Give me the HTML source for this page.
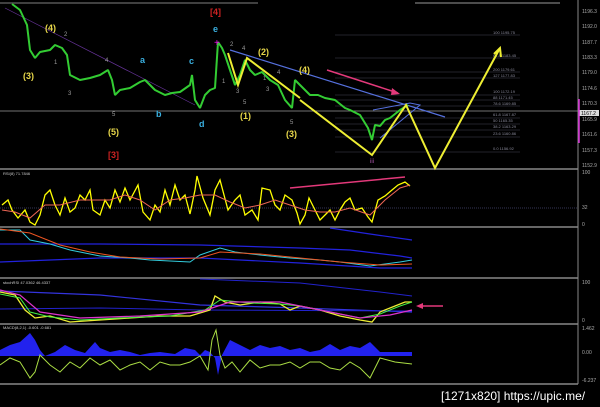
<!DOCTYPE html><html><head><style>
html,body{margin:0;padding:0;background:#000;width:600px;height:407px;overflow:hidden;font-family:"Liberation Sans",sans-serif}
svg{position:absolute;left:0;top:0}
.w{font-family:"Liberation Sans",sans-serif;font-size:9px;font-weight:bold}
.a{font-size:5px;fill:#aaa}
.f{font-size:4px;fill:#889}
</style></head><body>
<svg width="600" height="407" viewBox="0 0 600 407">
<rect width="600" height="407" fill="#000"/>
<!-- panel borders -->
<g stroke="#888" stroke-width="1.5">
<line x1="0" y1="169" x2="578" y2="169"/>
<line x1="0" y1="227" x2="578" y2="227"/>
<line x1="0" y1="278" x2="578" y2="278"/>
<line x1="0" y1="324" x2="578" y2="324"/>
<line x1="0" y1="384" x2="578" y2="384"/>
<line x1="0" y1="3" x2="258" y2="3" stroke="#555"/>
<line x1="415" y1="3" x2="560" y2="3" stroke="#666"/>
</g>
<line x1="578" y1="0" x2="578" y2="384" stroke="#888" stroke-width="1"/>
<line x1="0" y1="111" x2="578" y2="111" stroke="#999" stroke-width="0.8"/>
<!-- fib lines -->
<g stroke="#445" stroke-width="0.6">
<line x1="335" y1="35" x2="520" y2="35"/><line x1="335" y1="58" x2="520" y2="58"/>
<line x1="335" y1="72" x2="520" y2="72"/><line x1="335" y1="78" x2="520" y2="78"/>
<line x1="335" y1="95" x2="520" y2="95"/><line x1="335" y1="100" x2="520" y2="100"/>
<line x1="335" y1="106" x2="520" y2="106"/><line x1="335" y1="118" x2="520" y2="118"/>
<line x1="335" y1="124" x2="520" y2="124"/><line x1="335" y1="130" x2="520" y2="130"/>
<line x1="335" y1="137" x2="520" y2="137"/><line x1="335" y1="152" x2="520" y2="152"/>
</g>
<g class="f"><text x="493" y="34">100 1195.75</text><text x="493" y="57">61.8 1183.45</text><text x="493" y="71">200 1179.61</text><text x="493" y="77">127 1177.83</text><text x="493" y="93">100 1172.19</text><text x="493" y="99">88 1171.45</text><text x="493" y="105">78.6 1169.85</text><text x="493" y="116">61.8 1167.87</text><text x="493" y="122">50 1165.35</text><text x="493" y="128">38.2 1163.29</text><text x="493" y="135">23.6 1160.86</text><text x="493" y="150">0.0 1156.92</text></g>
<!-- trendlines -->
<line x1="5" y1="8" x2="195" y2="105" stroke="#639" stroke-width="0.7"/>
<line x1="230" y1="50" x2="445" y2="117" stroke="#5570dd" stroke-width="1.2"/>
<polyline points="373,110 410,103 420,105 380,138" fill="none" stroke="#5570dd" stroke-width="1"/>
<!-- price -->
<polyline points="12,4 20,10 27,25 30,50 35,58 40,52 50,50 55,45 62,48 67,55 70,75 80,80 90,78 100,75 108,70 112,80 115,95 120,90 130,88 140,82 145,80 155,90 165,95 172,93 180,92 190,85 192,75 195,100 200,108 205,95 210,90 215,88 218,42 222,48 225,55 230,70 235,85 240,75 245,60 250,70 255,75 262,72 270,80 278,85 285,100 292,108 295,80 300,85 305,90 310,95 318,95 325,98 335,100 345,108 350,110 360,115 368,128 372,140 375,125 380,126 385,120 390,118 400,110 408,105" fill="none" stroke="#3c3" stroke-width="2" stroke-linejoin="bevel"/>
<!-- yellow waves -->
<g fill="none" stroke="#ee3" stroke-width="2">
<polyline points="228,53 238,85 247,58 300,98"/>
<polyline points="300,100 372,155 406,105 435,168 500,48"/>
<polyline points="494,54 500,48 501,57"/>
</g>
<!-- pink arrow -->
<line x1="327" y1="70" x2="398" y2="93" stroke="#e3397a" stroke-width="1.5"/>
<polygon points="400,94 392,88 391,95" fill="#e3397a"/>
<!-- labels -->
<g class="w" fill="#e8d84a">
<text x="23" y="79">(3)</text><text x="45" y="31">(4)</text><text x="108" y="135">(5)</text>
<text x="240" y="119">(1)</text><text x="258" y="55">(2)</text><text x="286" y="137">(3)</text><text x="299" y="73">(4)</text>
</g>
<g class="w" fill="#3ab0e0"><text x="140" y="63">a</text><text x="156" y="117">b</text><text x="189" y="64">c</text><text x="199" y="127">d</text><text x="213" y="32">e</text></g>
<g class="w" fill="#c22" font-size="11"><text x="108" y="158">[3]</text><text x="210" y="15">[4]</text></g>
<g font-size="6" fill="#999"><text x="64" y="36">2</text><text x="54" y="64">1</text><text x="105" y="62">4</text><text x="68" y="95">3</text><text x="112" y="116">5</text><text x="230" y="46">2</text><text x="242" y="50">4</text><text x="236" y="93">3</text><text x="243" y="104">5</text><text x="222" y="83">1</text><text x="266" y="91">3</text><text x="277" y="74">4</text><text x="290" y="124">5</text><text x="263" y="80">1</text></g>
<text x="214" y="46" fill="#e0e" font-size="10">+</text>
<text x="370" y="163" fill="#a5a" font-size="6">iii</text>
<!-- right axis labels -->
<g class="a"><text x="582" y="13">1196.3</text><text x="582" y="28">1192.0</text><text x="582" y="44">1187.7</text><text x="582" y="59">1183.3</text><text x="582" y="74">1179.0</text><text x="582" y="90">1174.6</text><text x="582" y="105">1170.3</text><text x="582" y="121">1165.9</text><text x="582" y="136">1161.6</text><text x="582" y="152">1157.3</text><text x="582" y="167">1152.9</text></g>
<rect x="579" y="110" width="20" height="6" fill="#ddd"/><text x="581" y="115" font-size="5" fill="#000">1167.2</text>
<line x1="579" y1="99" x2="579" y2="143" stroke="#d3d" stroke-width="1.5"/>
<!-- RSI -->
<text x="3" y="175" font-size="4" fill="#ccc">RSI(8) 71.7846</text>
<line x1="0" y1="208" x2="578" y2="208" stroke="#335" stroke-dasharray="1,1"/>
<polyline points="2,205 8,200 12,210 18,218 25,210 30,222 35,225 40,215 45,195 50,190 55,205 60,215 65,198 70,212 75,208 80,195 85,200 90,190 93,210 100,215 105,200 110,208 115,190 120,202 125,188 130,200 138,185 143,212 150,220 155,205 160,212 165,190 170,205 175,185 180,200 185,195 190,214 195,190 197,176 203,198 210,215 215,190 220,180 228,210 235,200 240,195 245,215 252,210 258,220 262,188 270,190 275,205 280,210 285,195 292,200 297,213 300,224 305,215 309,198 315,210 320,220 325,215 330,210 335,220 340,210 345,202 350,198 355,210 362,208 368,217 372,222 378,200 385,196 392,190 398,185 405,182 410,186" fill="none" stroke="#ff0" stroke-width="1.3"/>
<polyline points="2,210 15,212 30,218 45,205 60,205 80,200 95,200 110,200 125,195 140,200 155,210 170,200 185,198 200,195 215,195 230,202 245,208 260,205 275,200 290,205 305,210 320,212 335,212 350,208 370,215 385,200 400,188 410,185" fill="none" stroke="#e65" stroke-width="1"/>
<line x1="290" y1="188" x2="405" y2="177" stroke="#e3397a" stroke-width="1.5"/>
<g class="a" font-size="4"><text x="582" y="174">100</text><text x="582" y="209">32</text><text x="582" y="226">0</text></g>
<!-- panel 2 -->
<polyline points="0,244 100,244 200,245 300,248 350,250 400,256 412,258" fill="none" stroke="#22d" stroke-width="1.2"/>
<polyline points="0,262 100,258 200,258 300,263 380,268 412,268" fill="none" stroke="#22d" stroke-width="1.2"/>
<polyline points="330,228 370,234 412,240" fill="none" stroke="#22d" stroke-width="1.2"/>
<polyline points="0,230 20,230 30,240 50,244 70,250 100,256 130,258 150,260 190,262 200,255 220,248 235,252 260,255 290,258 320,260 340,262 370,266 385,264 400,262 412,260" fill="none" stroke="#3cd" stroke-width="1"/>
<polyline points="0,229 30,233 60,245 90,252 120,257 160,259 200,258 220,252 260,254 300,258 340,262 380,265 412,264" fill="none" stroke="#e52" stroke-width="1"/>
<!-- stoch -->
<text x="3" y="284" font-size="4" fill="#ccc">stochRSI 47.0362 46.4337</text>
<polyline points="0,291 100,295 200,305 300,308 412,312" fill="none" stroke="#33d" stroke-width="1.2"/>
<polyline points="0,309 100,308 200,310 412,311" fill="none" stroke="#22c" stroke-width="1"/>
<polyline points="200,279 300,283 380,292 412,296" fill="none" stroke="#22c" stroke-width="1"/>
<polyline points="0,292 15,295 25,310 35,318 50,316 70,322 100,320 130,318 160,316 190,316 210,310 215,296 225,302 240,305 260,302 280,304 290,310 300,306 320,310 340,316 360,320 372,322 380,312 395,306 405,302 412,302" fill="none" stroke="#ee3" stroke-width="1.3"/>
<polyline points="0,294 20,298 30,312 50,317 80,320 120,318 170,316 205,310 220,300 250,303 280,304 300,306 330,312 360,318 380,314 400,306 412,302" fill="none" stroke="#4e4" stroke-width="1"/>
<polyline points="0,290 20,295 40,312 80,318 140,316 200,312 230,302 280,302 320,310 360,318 390,315 412,310" fill="none" stroke="#d3c" stroke-width="1.2"/>
<line x1="443" y1="306" x2="420" y2="306" stroke="#e3397a" stroke-width="1.5"/>
<polygon points="416,306 423,303 423,309" fill="#e3397a"/>
<g class="a" font-size="4"><text x="582" y="284">100</text><text x="582" y="322">0</text></g>
<!-- MACD -->
<text x="3" y="329" font-size="4" fill="#ccc">MACD(8,2,1) -0.601 -0.681</text>
<path d="M0,350 L10,345 L20,342 L30,333 L35,340 L40,350 L45,356 L55,352 L65,345 L75,350 L85,353 L95,342 L100,348 L110,352 L120,350 L130,352 L140,355 L150,353 L160,352 L175,354 L185,348 L195,350 L200,355 L205,350 L210,352 L215,358 L218,375 L222,355 L230,340 L240,345 L250,350 L260,345 L270,348 L280,346 L290,350 L300,348 L310,352 L320,350 L330,344 L340,350 L350,346 L360,348 L370,342 L380,352 L412,352 L412,356 L0,356Z" fill="#22e"/>
<polyline points="0,365 10,358 20,362 30,378 35,372 40,355 50,365 60,372 70,362 80,368 90,358 100,365 110,360 120,370 130,365 140,362 150,370 160,362 170,365 180,365 190,362 200,356 208,370 212,340 216,330 220,355 225,368 232,362 240,372 250,360 260,368 270,365 280,365 290,362 300,368 310,362 320,362 330,368 340,370 350,362 360,368 370,378 380,358 395,362 412,364" fill="none" stroke="#ad4" stroke-width="1"/>
<g class="a" font-size="4"><text x="582" y="330">1.462</text><text x="582" y="354">0.00</text><text x="582" y="382">-6.237</text></g>
<!-- footer -->
<text x="441" y="400" font-size="12" fill="#fff" font-family="Liberation Sans Narrow,Liberation Sans,sans-serif">[1271x820] https://upic.me/</text>
</svg>
</body></html>
